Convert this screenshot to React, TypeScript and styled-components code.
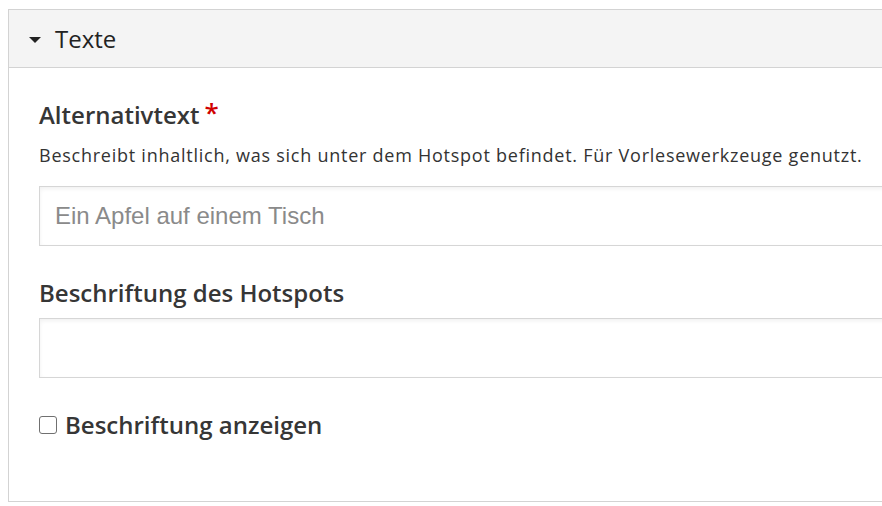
import styled, { createGlobalStyle } from "styled-components";

const GlobalStyle = createGlobalStyle`
  html, body {
    margin: 0;
    padding: 0;
    background: #ffffff;
    overflow: hidden;
  }
  body {
    padding: 9px 0 0 8px;
    font-family: "Open Sans", "Liberation Sans", sans-serif;
    color: #333333;
  }
`;

const Panel = styled.section`
  width: 920px;
  border: 1px solid #d3d3d3;
  background: #ffffff;
`;

const PanelHeader = styled.div`
  display: flex;
  align-items: center;
  gap: 14px;
  height: 57px;
  padding-left: 20px;
  background: #f4f4f4;
  border-bottom: 1px solid #d3d3d3;
  font-size: 24px;
  color: #222222;
`;

const Caret = styled.span`
  width: 0;
  height: 0;
  border-left: 6px solid transparent;
  border-right: 6px solid transparent;
  border-top: 6px solid #222222;
  margin-top: 2px;
`;

const PanelBody = styled.div`
  display: flex;
  flex-direction: column;
  padding: 31px 0 60px 30px;
`;

const Field = styled.div`
  display: flex;
  flex-direction: column;
  margin-bottom: 31px;
`;

const Label = styled.label`
  font-size: 24px;
  font-weight: 600;
  color: #363636;
  line-height: 32px;
`;

const Required = styled.span`
  color: #d00000;
  font-size: 26px;
  margin-left: 5px;
  vertical-align: top;
  line-height: 26px;
`;

const Hint = styled.div`
  font-size: 18px;
  letter-spacing: 0.75px;
  line-height: 24px;
  margin-top: 12px;
  color: #333333;
`;

const TextInput = styled.input<{ $gap: number }>`
  box-sizing: border-box;
  width: 100%;
  height: 60px;
  margin-top: ${(p) => p.$gap}px;
  padding: 0 15px;
  border: 1px solid #d6d6d6;
  border-right: none;
  box-shadow: inset 0 2px 4px rgba(0, 0, 0, 0.06);
  font-family: "Liberation Sans", Arial, sans-serif;
  font-size: 24px;
  color: #333333;
  outline: none;
  &::placeholder {
    color: #8a8a8a;
  }
`;

const CheckRow = styled.label`
  display: flex;
  align-items: center;
  gap: 8px;
  font-size: 24px;
  font-weight: 600;
  color: #363636;
  line-height: 32px;
`;

const Box = styled.span`
  box-sizing: border-box;
  width: 18px;
  height: 18px;
  border: 1.5px solid #707070;
  border-radius: 3px;
  background: #ffffff;
`;

export default function App() {
  return (
    <>
      <GlobalStyle />
      <Panel>
        <PanelHeader>
          <Caret />
          Texte
        </PanelHeader>
        <PanelBody>
          <Field>
            <Label>
              Alternativtext<Required>*</Required>
            </Label>
            <Hint>
              Beschreibt inhaltlich, was sich unter dem Hotspot befindet. Für
              Vorlesewerkzeuge genutzt.
            </Hint>
            <TextInput $gap={19} placeholder="Ein Apfel auf einem Tisch" />
          </Field>
          <Field>
            <Label>Beschriftung des Hotspots</Label>
            <TextInput $gap={9} />
          </Field>
          <CheckRow>
            <Box />
            Beschriftung anzeigen
          </CheckRow>
        </PanelBody>
      </Panel>
    </>
  );
}
